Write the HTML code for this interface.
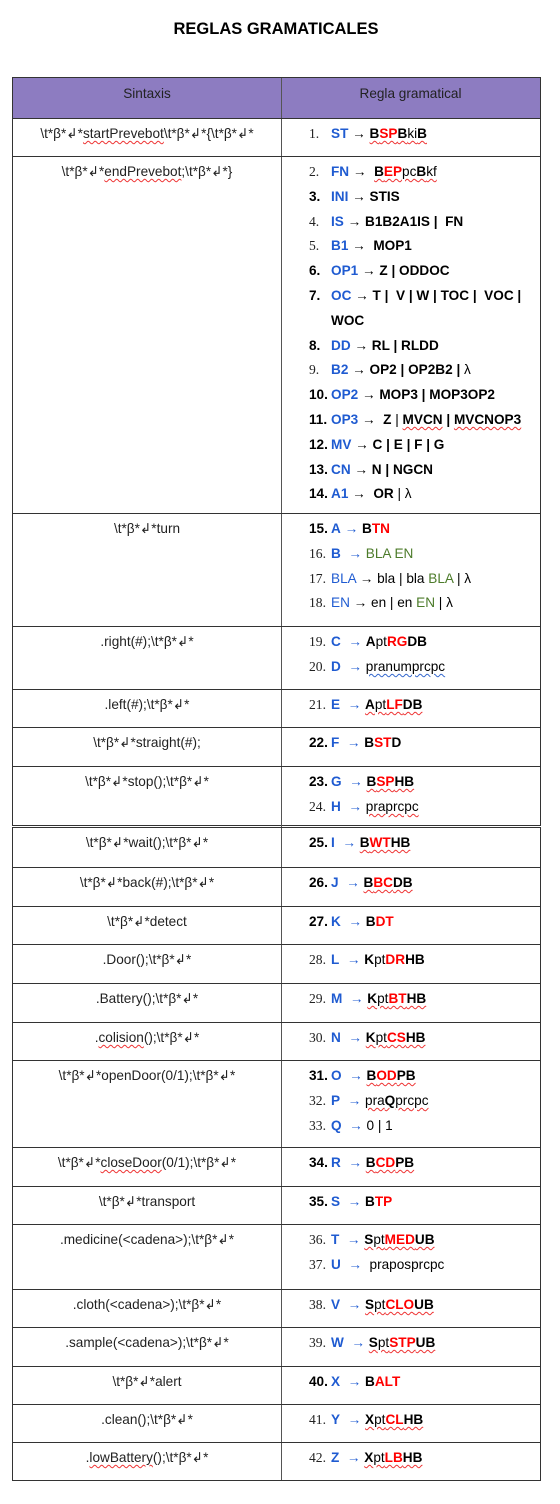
<!DOCTYPE html>
<html><head><meta charset="utf-8">
<style>
body{margin:0;background:#fff;width:560px;height:1504px;position:relative;font-family:"Liberation Sans",Arial,sans-serif;font-size:13.6px;color:#000;overflow:hidden}
h1{position:absolute;top:19px;left:0;width:552px;text-align:center;margin:0;font-size:16.5px;font-weight:bold;line-height:20px}
.t{position:absolute;left:12px;width:529px;border:1px solid #333;box-sizing:border-box}
.r{position:absolute;left:0;width:527px;border-top:1px solid #333;box-sizing:border-box}
.r:first-child{border-top:none}
.l{position:absolute;left:0;width:268px;top:3px;text-align:center;line-height:24.8px;color:#222}
.v{position:absolute;left:268px;top:0;bottom:0;border-left:1px solid #555}
.g{position:absolute;left:296px;top:3px;line-height:24.8px;white-space:nowrap}
.hd{background:#8d7cc1;color:#222}
.n{display:inline-block;width:22px;font-family:"Liberation Serif",serif;color:#222}
.nb{display:inline-block;width:22px;font-weight:bold}
.b{color:#1f5bd1;font-weight:bold}
.bn{color:#1f5bd1}
.k{font-weight:bold}
.rd{color:#f00;font-weight:bold}
.gr{color:#4c7b2a}
.a{color:#1f5bd1}
.w{text-decoration:underline wavy #e33;text-decoration-thickness:1px;text-underline-offset:2px}
.wb{text-decoration:underline wavy #36c;text-decoration-thickness:1px;text-underline-offset:2px}
</style></head><body>
<h1>REGLAS GRAMATICALES</h1>

<div class="t" style="top:77px;height:749px">
<div class="r hd" style="top:0;height:40px"><div class="l" style="top:4px">Sintaxis</div><div class="v"></div><div class="g" style="left:268px;width:259px;text-align:center;top:4px">Regla gramatical</div></div>
<div class="r" style="top:40px;height:38px"><div class="l">\t*β*↲*<span class="w">startPrevebot</span>\t*β*↲*{\t*β*↲*</div><div class="v"></div>
<div class="g"><span class="n">1.</span><span class="b">ST</span> → <span class="k w">B<span class="rd">SP</span>B<span style="font-weight:normal">ki</span>B</span></div></div>
<div class="r" style="top:78px;height:357px"><div class="l">\t*β*↲*<span class="w">endPrevebot</span>;\t*β*↲*}</div><div class="v"></div>
<div class="g">
<div><span class="n">2.</span><span class="b">FN</span> →&nbsp; <span class="w"><span class="k">B</span><span class="rd">EP</span>pc<span class="k">B</span>kf</span></div>
<div><span class="nb">3.</span><span class="b">INI</span> → <span class="k">STIS</span></div>
<div><span class="n">4.</span><span class="b">IS</span> → <span class="k">B1B2A1IS |&nbsp; FN</span></div>
<div><span class="n">5.</span><span class="b">B1</span> →&nbsp; <span class="k">MOP1</span></div>
<div><span class="nb">6.</span><span class="b">OP1</span> → <span class="k">Z | ODDOC</span></div>
<div><span class="nb">7.</span><span class="b">OC</span> → <span class="k">T |&nbsp; V | W | TOC |&nbsp; VOC |</span></div>
<div><span class="nb"></span><span class="k">WOC</span></div>
<div><span class="nb">8.</span><span class="b">DD</span> → <span class="k">RL | RLDD</span></div>
<div><span class="n">9.</span><span class="b">B2</span> → <span class="k">OP2 | OP2B2 |</span> λ</div>
<div><span class="nb">10.</span><span class="b">OP2</span> → <span class="k">MOP3 | MOP3OP2</span></div>
<div><span class="nb">11.</span><span class="b">OP3</span> →&nbsp; <span class="k">Z</span> | <span class="k w">MVCN</span> <span class="k">|</span> <span class="k w">MVCNOP3</span></div>
<div><span class="nb">12.</span><span class="b">MV</span> → <span class="k">C | E | F | G</span></div>
<div><span class="nb">13.</span><span class="b">CN</span> → <span class="k">N | NGCN</span></div>
<div><span class="nb">14.</span><span class="b">A1</span> →&nbsp; <span class="k">OR</span> | λ</div>
</div></div>
<div class="r" style="top:435px;height:113px"><div class="l">\t*β*↲*turn</div><div class="v"></div>
<div class="g">
<div><span class="nb">15.</span><span class="b">A</span> <span class="a">→</span> <span class="k">B</span><span class="rd">TN</span></div>
<div><span class="n">16.</span><span class="b">B</span>&nbsp; <span class="a">→</span> <span class="gr">BLA EN</span></div>
<div><span class="n">17.</span><span class="bn">BLA</span> → bla | bla <span class="gr">BLA</span> | λ</div>
<div><span class="n">18.</span><span class="bn">EN</span> → en | en <span class="gr">EN</span> | λ</div>
</div></div>
<div class="r" style="top:548px;height:63px"><div class="l">.right(#);\t*β*↲*</div><div class="v"></div>
<div class="g">
<div><span class="n">19.</span><span class="b">C</span>&nbsp; <span class="a">→</span> <span class="k">A</span>pt<span class="rd">RG</span><span class="k">DB</span></div>
<div><span class="n">20.</span><span class="b">D</span>&nbsp; <span class="a">→</span> <span class="wb">pranumprcpc</span></div>
</div></div>
<div class="r" style="top:611px;height:38px"><div class="l">.left(#);\t*β*↲*</div><div class="v"></div>
<div class="g"><span class="n">21.</span><span class="b">E</span>&nbsp; <span class="a">→</span> <span class="w"><span class="k">A</span>pt<span class="rd">LF</span><span class="k">DB</span></span></div></div>
<div class="r" style="top:649px;height:39px"><div class="l">\t*β*↲*straight(#);</div><div class="v"></div>
<div class="g"><span class="nb">22.</span><span class="b">F</span>&nbsp; <span class="a">→</span> <span class="k">B</span><span class="rd">ST</span><span class="k">D</span></div></div>
<div class="r" style="top:688px;height:61px"><div class="l">\t*β*↲*stop();\t*β*↲*</div><div class="v"></div>
<div class="g">
<div><span class="nb">23.</span><span class="b">G</span>&nbsp; <span class="a">→</span> <span class="w"><span class="k">B</span><span class="rd">SP</span><span class="k">HB</span></span></div>
<div><span class="n">24.</span><span class="b">H</span>&nbsp; <span class="a">→</span> <span class="w">praprcpc</span></div>
</div></div>
</div>

<div class="t" style="top:827px;height:654px">
<div class="r" style="top:0;height:39px"><div class="l">\t*β*↲*wait();\t*β*↲*</div><div class="v"></div>
<div class="g"><span class="nb">25.</span><span class="b">I</span>&nbsp; <span class="a">→</span> <span class="w"><span class="k">B</span><span class="rd">WT</span><span class="k">HB</span></span></div></div>
<div class="r" style="top:39px;height:39px"><div class="l">\t*β*↲*back(#);\t*β*↲*</div><div class="v"></div>
<div class="g"><span class="nb">26.</span><span class="b">J</span>&nbsp; <span class="a">→</span> <span class="w"><span class="k">B</span><span class="rd">BC</span><span class="k">DB</span></span></div></div>
<div class="r" style="top:78px;height:38px"><div class="l">\t*β*↲*detect</div><div class="v"></div>
<div class="g"><span class="nb">27.</span><span class="b">K</span>&nbsp; <span class="a">→</span> <span class="k">B</span><span class="rd">DT</span></div></div>
<div class="r" style="top:116px;height:39px"><div class="l">.Door();\t*β*↲*</div><div class="v"></div>
<div class="g"><span class="n">28.</span><span class="b">L</span>&nbsp; <span class="a">→</span> <span class="k">K</span>pt<span class="rd">DR</span><span class="k">HB</span></div></div>
<div class="r" style="top:155px;height:39px"><div class="l">.Battery();\t*β*↲*</div><div class="v"></div>
<div class="g"><span class="n">29.</span><span class="b">M</span>&nbsp; <span class="a">→</span> <span class="w"><span class="k">K</span>pt<span class="rd">BT</span><span class="k">HB</span></span></div></div>
<div class="r" style="top:194px;height:38px"><div class="l">.<span class="w">colision</span>();\t*β*↲*</div><div class="v"></div>
<div class="g"><span class="n">30.</span><span class="b">N</span>&nbsp; <span class="a">→</span> <span class="w"><span class="k">K</span>pt<span class="rd">CS</span><span class="k">HB</span></span></div></div>
<div class="r" style="top:232px;height:87px"><div class="l">\t*β*↲*openDoor(0/1);\t*β*↲*</div><div class="v"></div>
<div class="g">
<div><span class="nb">31.</span><span class="b">O</span>&nbsp; <span class="a">→</span> <span class="w"><span class="k">B</span><span class="rd">OD</span><span class="k">PB</span></span></div>
<div><span class="n">32.</span><span class="b">P</span>&nbsp; <span class="a">→</span> <span class="w">pra<span class="k">Q</span>prcpc</span></div>
<div><span class="n">33.</span><span class="b">Q</span>&nbsp; <span class="a">→</span> 0 | 1</div>
</div></div>
<div class="r" style="top:319px;height:39px"><div class="l">\t*β*↲*<span class="w">closeDoor</span>(0/1);\t*β*↲*</div><div class="v"></div>
<div class="g"><span class="nb">34.</span><span class="b">R</span>&nbsp; <span class="a">→</span> <span class="w"><span class="k">B</span><span class="rd">CD</span><span class="k">PB</span></span></div></div>
<div class="r" style="top:358px;height:38px"><div class="l">\t*β*↲*transport</div><div class="v"></div>
<div class="g"><span class="nb">35.</span><span class="b">S</span>&nbsp; <span class="a">→</span> <span class="k">B</span><span class="rd">TP</span></div></div>
<div class="r" style="top:396px;height:65px"><div class="l">.medicine(&lt;cadena&gt;);\t*β*↲*</div><div class="v"></div>
<div class="g">
<div><span class="n">36.</span><span class="b">T</span>&nbsp; <span class="a">→</span> <span class="w"><span class="k">S</span>pt<span class="rd">MED</span><span class="k">UB</span></span></div>
<div><span class="n">37.</span><span class="b">U</span>&nbsp; <span class="a">→</span>&nbsp; praposprcpc</div>
</div></div>
<div class="r" style="top:461px;height:38px"><div class="l">.cloth(&lt;cadena&gt;);\t*β*↲*</div><div class="v"></div>
<div class="g"><span class="n">38.</span><span class="b">V</span>&nbsp; <span class="a">→</span> <span class="w"><span class="k">S</span>pt<span class="rd">CLO</span><span class="k">UB</span></span></div></div>
<div class="r" style="top:499px;height:39px"><div class="l">.sample(&lt;cadena&gt;);\t*β*↲*</div><div class="v"></div>
<div class="g"><span class="n">39.</span><span class="b">W</span>&nbsp; <span class="a">→</span> <span class="w"><span class="k">S</span>pt<span class="rd">STP</span><span class="k">UB</span></span></div></div>
<div class="r" style="top:538px;height:38px"><div class="l">\t*β*↲*alert</div><div class="v"></div>
<div class="g"><span class="nb">40.</span><span class="b">X</span>&nbsp; <span class="a">→</span> <span class="k">B</span><span class="rd">ALT</span></div></div>
<div class="r" style="top:576px;height:38px"><div class="l">.clean();\t*β*↲*</div><div class="v"></div>
<div class="g"><span class="n">41.</span><span class="b">Y</span>&nbsp; <span class="a">→</span> <span class="w"><span class="k">X</span>pt<span class="rd">CL</span><span class="k">HB</span></span></div></div>
<div class="r" style="top:614px;height:38px"><div class="l">.<span class="w">lowBattery</span>();\t*β*↲*</div><div class="v"></div>
<div class="g"><span class="n">42.</span><span class="b">Z</span>&nbsp; <span class="a">→</span> <span class="w"><span class="k">X</span>pt<span class="rd">LB</span><span class="k">HB</span></span></div></div>
</div>
</body></html>
